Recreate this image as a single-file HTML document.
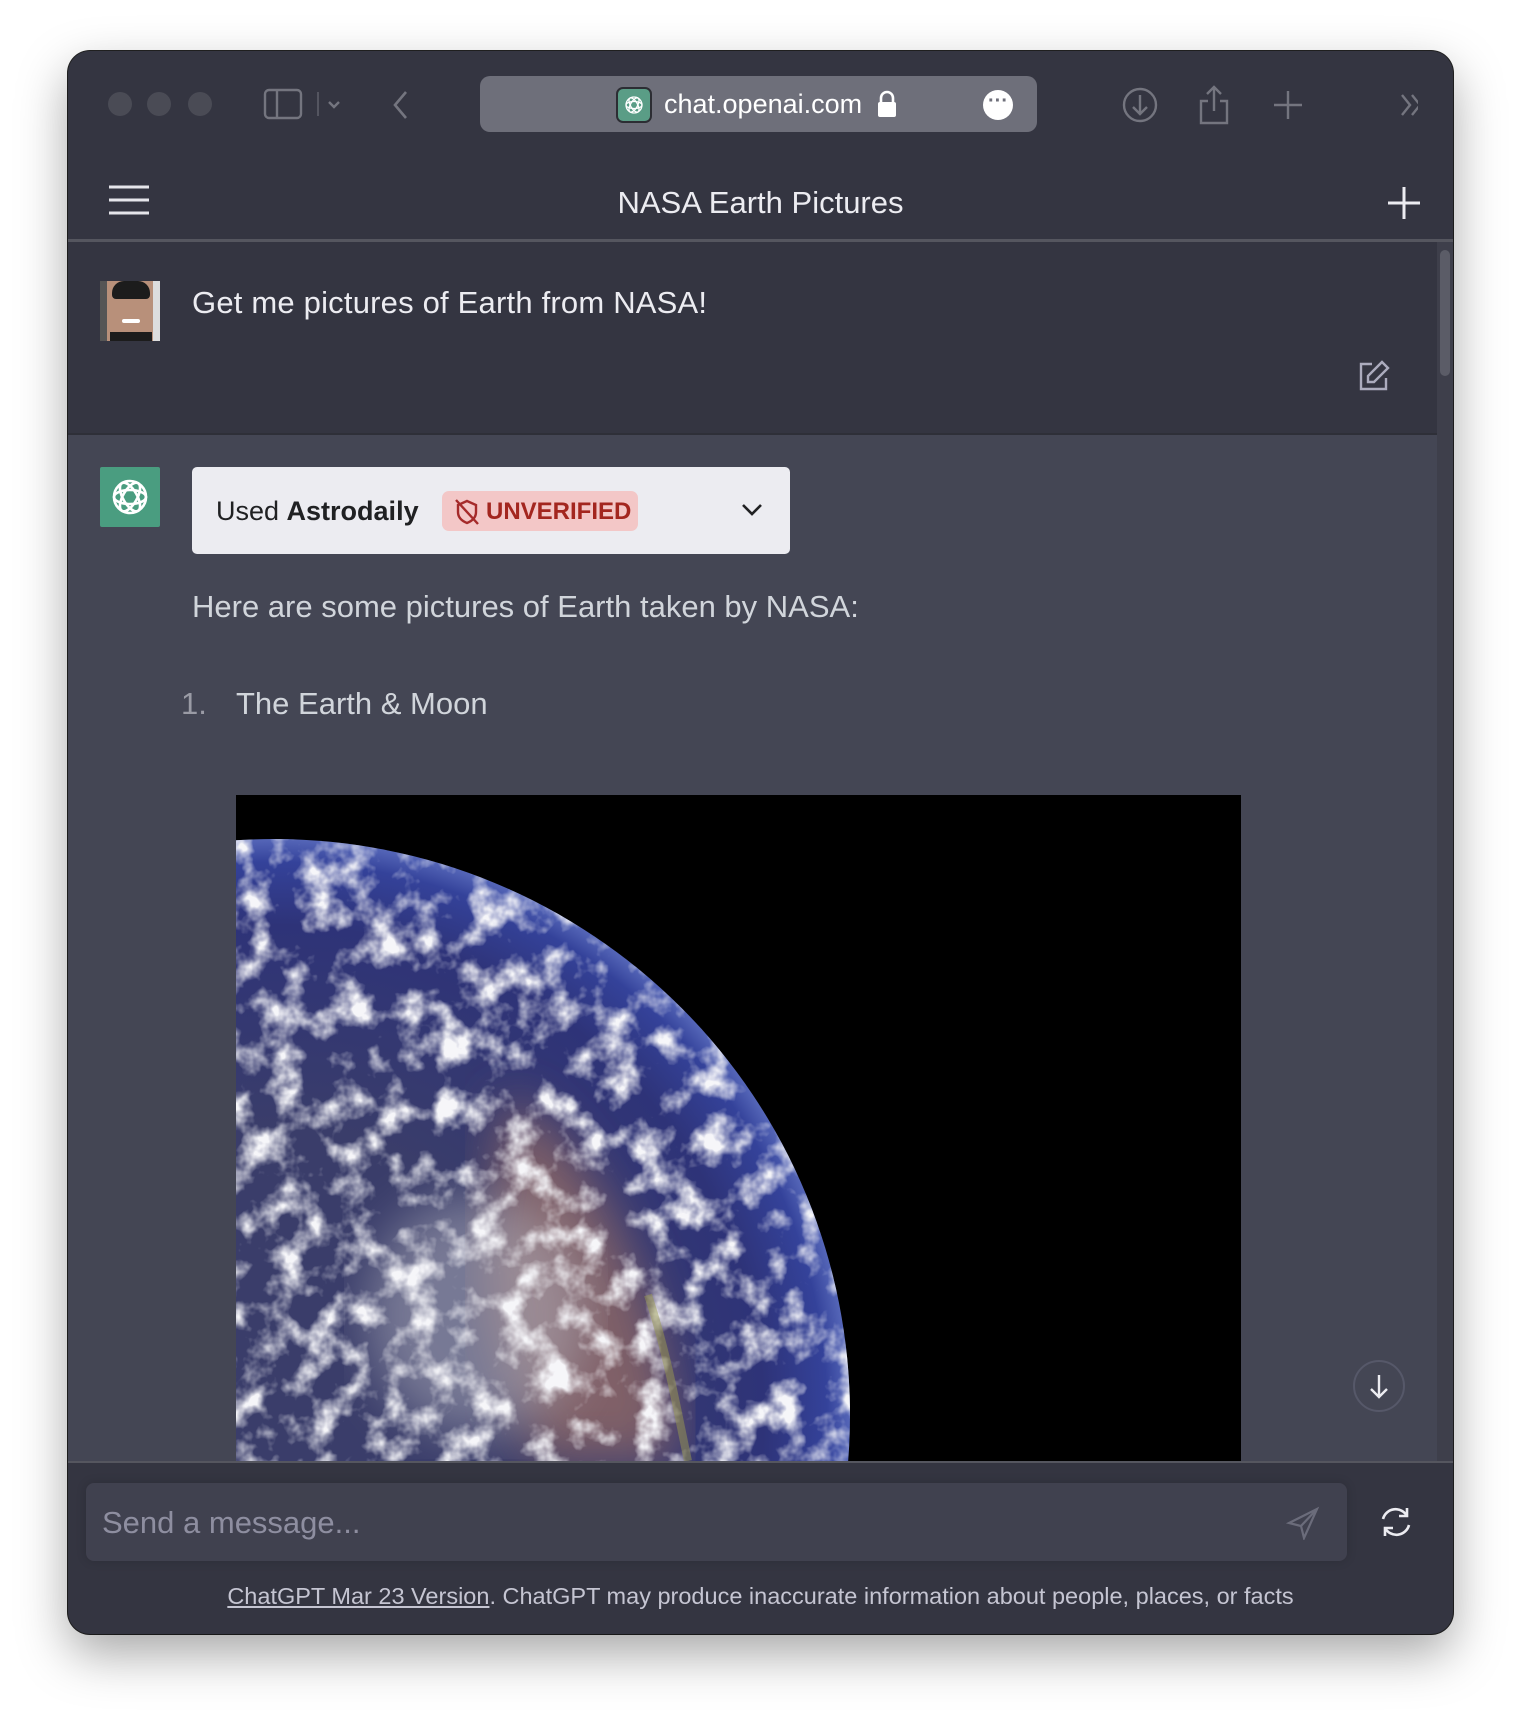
<!DOCTYPE html>
<html><head><meta charset="utf-8"><style>
*{box-sizing:border-box;margin:0;padding:0}
html,body{width:1520px;height:1718px;overflow:hidden}
body{background:#fff;font-family:"Liberation Sans",sans-serif;position:relative}
.win{position:absolute;left:68px;top:51px;width:1385px;height:1583px;border-radius:22px;background:#343541;overflow:hidden;box-shadow:0 20px 50px rgba(0,0,0,.35),0 0 0 1px #222;}
.abs{position:absolute}
.dot{position:absolute;top:41px;width:24px;height:24px;border-radius:50%;background:#4a4b55}
</style></head><body>
<div class="win">
 <div class="dot" style="left:40px"></div><div class="dot" style="left:79px"></div><div class="dot" style="left:120px"></div>
 <svg class="abs" style="left:195px;top:37px" width="90" height="32" fill="none" stroke="#74757f" stroke-width="2.4"><rect x="2" y="2" width="36" height="28" rx="4"/><line x1="14" y1="2" x2="14" y2="30"/><line x1="55" y1="4" x2="55" y2="28" stroke-width="1"/><path d="M66 14l5 5 5-5"/></svg>
 <svg class="abs" style="left:322px;top:38px" width="24" height="32" fill="none" stroke="#74757f" stroke-width="2.6"><path d="M16 3L5 16l11 13"/></svg>
 <div class="abs" style="left:412px;top:25px;width:557px;height:56px;border-radius:10px;background:#6e6f7a"></div>
 <div class="abs" style="left:548px;top:36px;width:36px;height:36px;border-radius:7px;background:#5a9d86;border:2px solid #2c2d33"></div>
 <svg class="abs" style="left:554px;top:42px" width="24" height="24" viewBox="0 0 24 24" fill="none" stroke="#fff" stroke-width="1.3"><circle cx="12" cy="12" r="8"/><ellipse cx="12" cy="12" rx="8" ry="3.5"/><ellipse cx="12" cy="12" rx="8" ry="3.5" transform="rotate(60 12 12)"/><ellipse cx="12" cy="12" rx="8" ry="3.5" transform="rotate(120 12 12)"/></svg>
 <div class="abs" style="left:596px;top:36px;font-size:27px;color:#fff;line-height:34px">chat.openai.com</div>
 <svg class="abs" style="left:808px;top:38px" width="22" height="30"><path d="M5 13V9a6 6 0 0 1 12 0v4" fill="none" stroke="#fff" stroke-width="2.6"/><rect x="2" y="13" width="18" height="15" rx="2" fill="#fff"/></svg>
 <div class="abs" style="left:915px;top:39px;width:30px;height:30px;border-radius:50%;background:#fff;color:#6e6f7a;font-size:20px;line-height:22px;text-align:center;font-weight:bold">···</div>
 <svg class="abs" style="left:1050px;top:32px" width="300" height="44" fill="none" stroke="#74757f" stroke-width="2.4"><circle cx="22" cy="22" r="16"/><path d="M22 12v19M15 24l7 7 7-7"/><path d="M90 18h-7v22h26V18h-7M96 4v24M89 11l7-7 7 7"/><path d="M170 8v28M156 22h28"/><path d="M284 12l8 10-8 10M294 12l8 10-8 10"/></svg>
 <svg class="abs" style="left:40px;top:133px" width="42" height="32" stroke="#e5e5ea" stroke-width="3"><path d="M1 3h40M1 16h40M1 29h40"/></svg>
 <div class="abs" style="left:0;width:1385px;top:134px;text-align:center;font-size:31px;color:#ececf1">NASA Earth Pictures</div>
 <svg class="abs" style="left:1318px;top:134px" width="36" height="36" stroke="#ececf1" stroke-width="3"><path d="M18 2v32M2 18h32"/></svg>
 <div class="abs" style="left:0;top:188px;width:1385px;height:3px;background:#55565f"></div>
 <div class="abs" style="left:32px;top:230px;width:60px;height:60px;background:linear-gradient(90deg,#555 0 12%,#b8907a 12% 88%,#ddd 88%)"><div style="position:absolute;left:12px;top:0;width:38px;height:18px;background:#1c1c1c;border-radius:12px 12px 4px 4px"></div><div style="position:absolute;left:10px;bottom:0;width:42px;height:9px;background:#1c1c1c"></div><div style="position:absolute;left:22px;top:38px;width:18px;height:4px;background:#fff;border-radius:2px"></div></div>
 <div class="abs" style="left:124px;top:232px;font-size:31px;color:#ececf1;line-height:40px;letter-spacing:0.2px">Get me pictures of Earth from NASA!</div>
 <svg class="abs" style="left:1289px;top:308px" width="34" height="34" fill="none" stroke="#acacbe" stroke-width="2.4"><path d="M15 5H4v25h25V19"/><path d="M25 3l6 6-14 14h-6v-6z"/></svg>
 <div class="abs" style="left:0;top:382px;width:1369px;height:1028px;background:#444654;border-top:2px solid #2e2f38"></div>
 <div class="abs" style="left:1369px;top:191px;width:16px;height:1219px;background:#3e3f4b"></div>
 <div class="abs" style="left:1372px;top:199px;width:10px;height:126px;border-radius:5px;background:#5b5c67"></div>
 <div class="abs" style="left:32px;top:416px;width:60px;height:60px;background:#4a9d80;border-radius:2px"></div>
 <svg class="abs" style="left:38px;top:422px" width="48" height="48" viewBox="0 0 24 24" fill="none" stroke="#fff" stroke-width="1.3"><circle cx="12" cy="12" r="8"/><ellipse cx="12" cy="12" rx="8" ry="3.5"/><ellipse cx="12" cy="12" rx="8" ry="3.5" transform="rotate(60 12 12)"/><ellipse cx="12" cy="12" rx="8" ry="3.5" transform="rotate(120 12 12)"/></svg>
 <div class="abs" style="left:124px;top:416px;width:598px;height:87px;background:#ececf1;border-radius:5px"></div>
 <div class="abs" style="left:148px;top:442px;font-size:27px;color:#202123;line-height:36px">Used <b>Astrodaily</b></div>
 <div class="abs" style="left:374px;top:440px;width:196px;height:40px;background:#f3c7c7;border-radius:7px"></div>
 <svg class="abs" style="left:386px;top:447px" width="26" height="28" fill="none" stroke="#a52a2a" stroke-width="2.4"><path d="M13 3l9 4v7c0 6-4 9-9 11-5-2-9-5-9-11V7z"/><path d="M2 2l22 24"/></svg>
 <div class="abs" style="left:418px;top:444px;font-size:24px;font-weight:bold;color:#a3261f;line-height:34px">UNVERIFIED</div>
 <svg class="abs" style="left:672px;top:450px" width="24" height="18" fill="none" stroke="#202123" stroke-width="2.6"><path d="M3 4l9 9 9-9"/></svg>
 <div class="abs" style="left:124px;top:536px;font-size:31px;color:#d1d5db;line-height:40px">Here are some pictures of Earth taken by NASA:</div>
 <div class="abs" style="left:113px;top:633px;font-size:31px;color:#9a9ba5;line-height:40px">1.</div>
 <div class="abs" style="left:168px;top:633px;font-size:31px;color:#d1d5db;line-height:40px">The Earth &amp; Moon</div>
 <svg class="abs" style="left:168px;top:744px" width="1005" height="666">
  <defs>
   <radialGradient id="g" cx="38" cy="620" r="576" gradientUnits="userSpaceOnUse"><stop offset="0.5" stop-color="#3a3d6a"/><stop offset="0.85" stop-color="#2e3378"/><stop offset="0.96" stop-color="#34429a"/><stop offset="1" stop-color="#5566b8"/></radialGradient>
   <clipPath id="c"><circle cx="38" cy="620" r="576"/></clipPath>
   <filter id="cl" x="0" y="0" width="100%" height="100%"><feTurbulence type="fractalNoise" baseFrequency="0.03" numOctaves="4" seed="7"/><feColorMatrix type="matrix" values="0 0 0 0 0.92  0 0 0 0 0.92  0 0 0 0 0.95  0 0 0 3.2 -1.45"/></filter>
   <filter id="bl"><feGaussianBlur stdDeviation="25"/></filter>
  </defs>
  <rect width="1005" height="666" fill="#000"/>
  <circle cx="38" cy="620" r="576" fill="url(#g)"/>
  <g clip-path="url(#c)">
   <path d="M270 300c70 40 110 120 140 200 20 60 30 110 30 166H300c-20-60-60-140-50-220z" fill="#806068" filter="url(#bl)"/>
   <ellipse cx="240" cy="520" rx="110" ry="120" fill="#b5b5c0" opacity=".5" filter="url(#bl)"/>
   <rect width="620" height="666" filter="url(#cl)"/>
   <path d="M412 500c20 60 30 120 40 166" stroke="#9a9a50" stroke-width="8" fill="none" opacity=".5"/>
  </g>
 </svg>
 <div class="abs" style="left:1285px;top:1309px;width:52px;height:52px;border-radius:50%;background:#444654;border:2px solid #565869"></div>
 <svg class="abs" style="left:1297px;top:1321px" width="28" height="28" fill="none" stroke="#ececf1" stroke-width="2.4"><path d="M14 3v22M6 17l8 8 8-8"/></svg>
 <div class="abs" style="left:0;top:1410px;width:1385px;height:2px;background:#55565f"></div>
 <div class="abs" style="left:18px;top:1432px;width:1261px;height:78px;background:#40414f;border-radius:8px;box-shadow:0 0 10px rgba(0,0,0,.15)"></div>
 <div class="abs" style="left:34px;top:1452px;font-size:31px;color:#8e8ea0;line-height:40px">Send a message...</div>
 <svg class="abs" style="left:1218px;top:1455px" width="34" height="34" fill="none" stroke="#6b6c7b" stroke-width="2.2"><path d="M31 3L3 17l12 3 3 12z"/><path d="M15 20L31 3"/></svg>
 <svg class="abs" style="left:1311px;top:1454px" width="34" height="34" fill="none" stroke="#ececf1" stroke-width="2.6"><path d="M4 14a13 13 0 0 1 24-3M30 20a13 13 0 0 1-24 3"/><path d="M28 3v8h-8M6 31v-8h8"/></svg>
 <div class="abs" style="left:0;width:1385px;top:1531px;text-align:center;font-size:23.5px;color:#c5c5d2;line-height:28px"><u>ChatGPT Mar 23 Version</u>. ChatGPT may produce inaccurate information about people, places, or facts</div>
</div>
</body></html>
